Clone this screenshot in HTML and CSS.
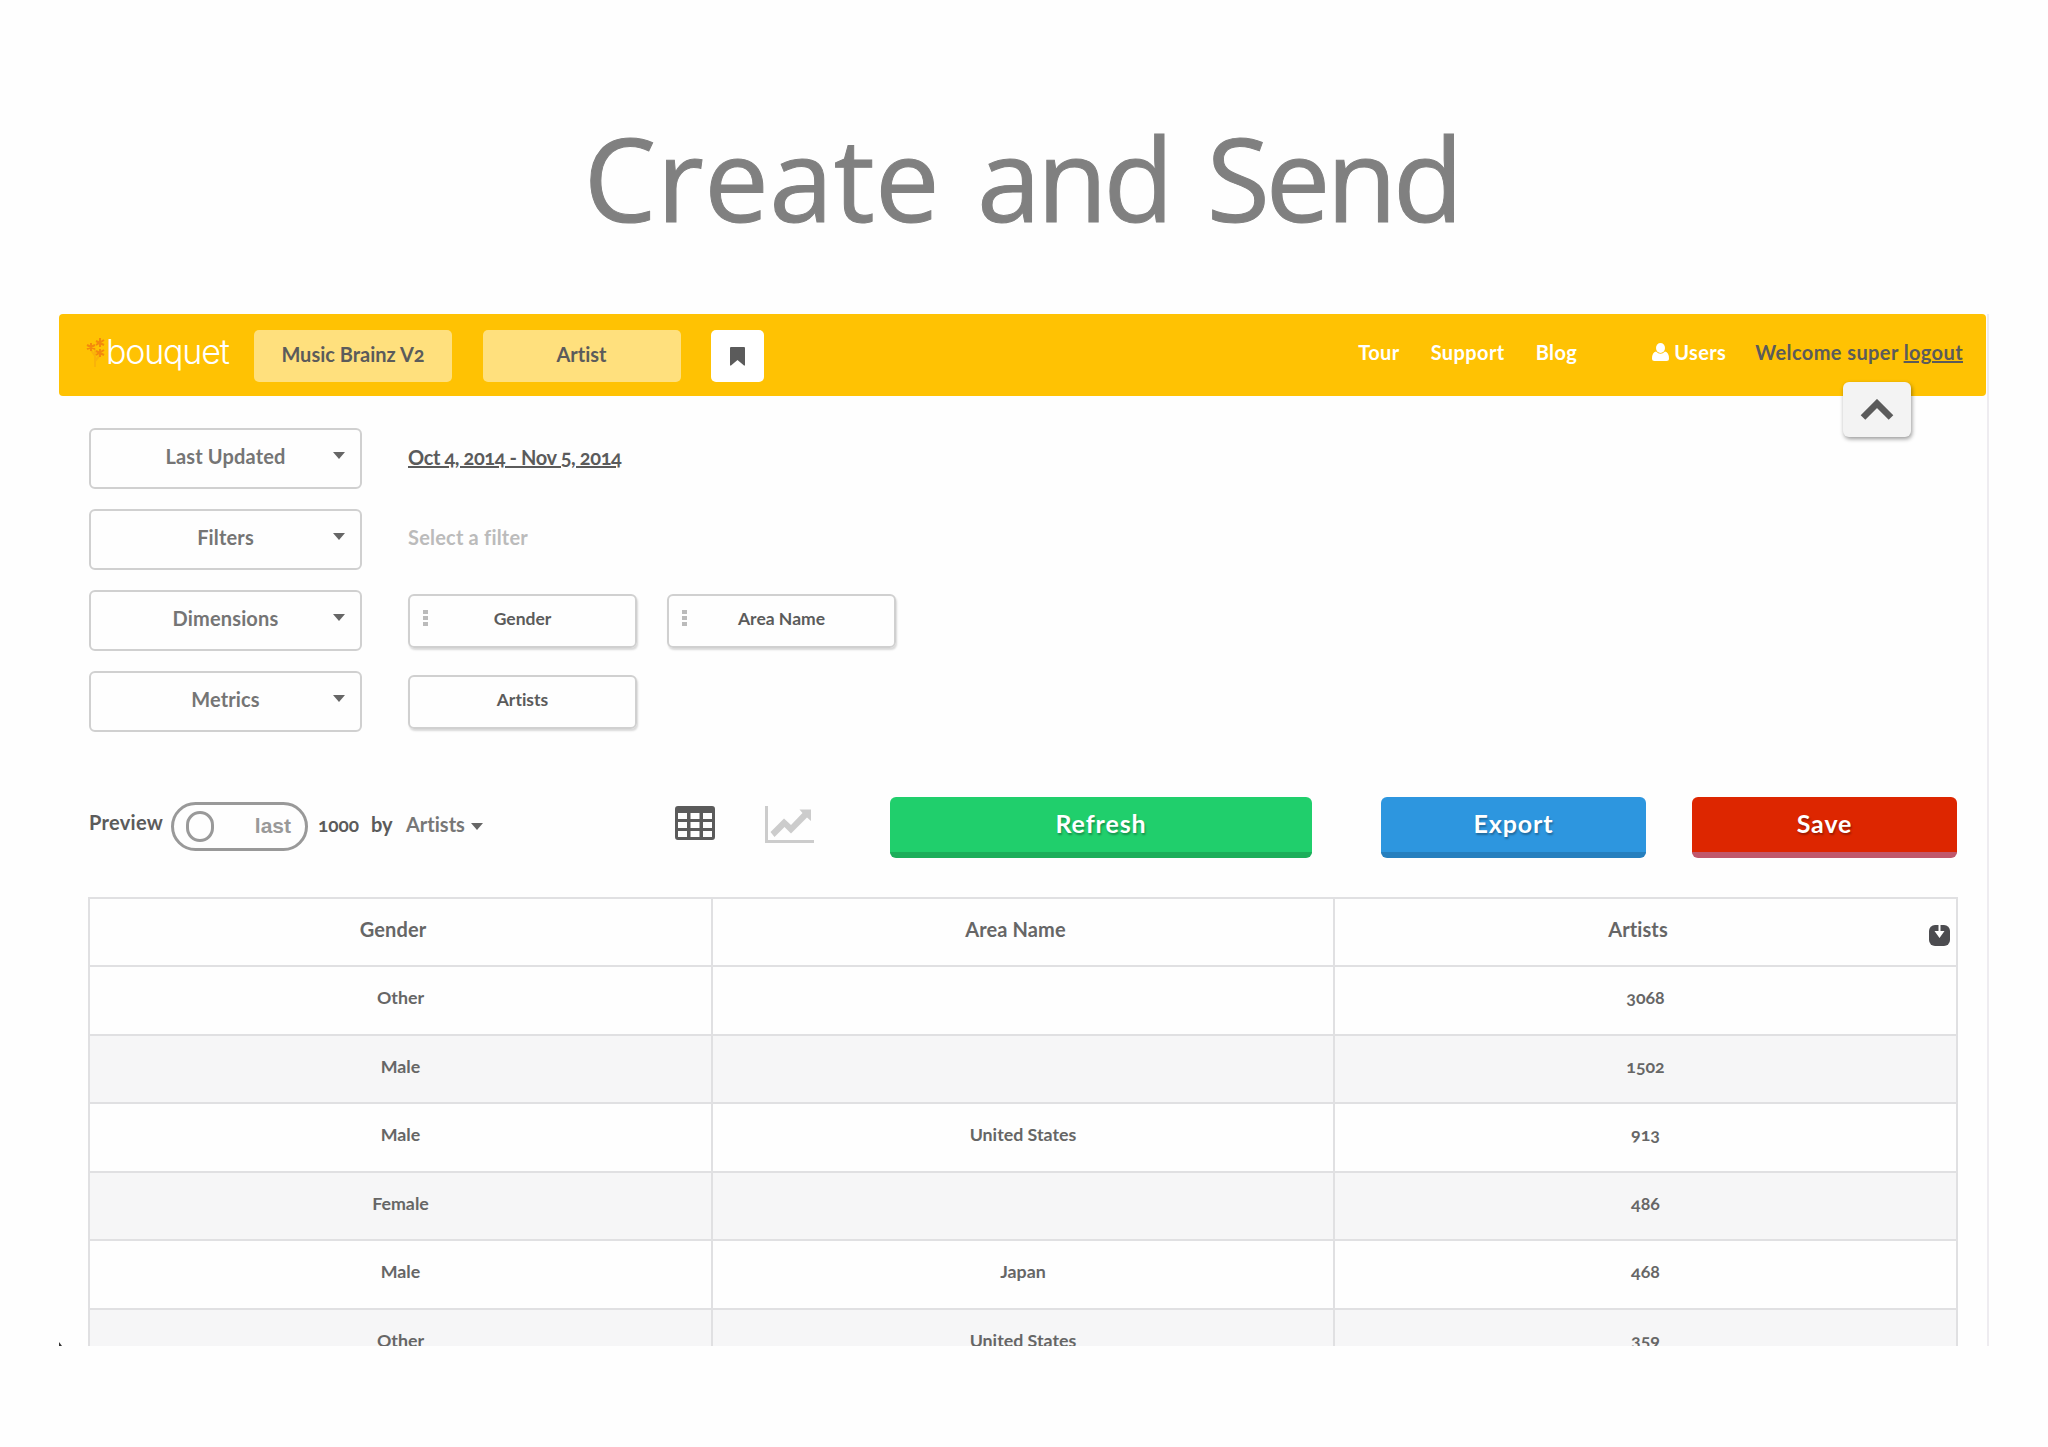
FILE: index.html
```html
<!DOCTYPE html>
<html lang="en">
<head>
    <meta charset="utf-8">
    <title>Create and Send</title>
    <link rel="stylesheet" href="styles.css">
</head>
<body>

<h1 class="title"><span class="loose">Create</span> <span class="tight">and</span> <span class="tight">Send</span></h1>

<div class="app">
    <header class="topbar">
        <div class="logo">
            <svg class="logo-flower" width="20" height="32" viewBox="0 0 20 32">
                <path class="stem" d="M9 12v18M5 13l4 6M14 18l-5 6"/>
                <path class="petals" d="M14 1v9M10 4l8 4M18 3l-8 5M5 6v8M1 8l8 4M9 8l-8 4M14 12v8M10 14l8 4M18 13l-8 5"/>
            </svg>
            <span class="logo-name">bouquet</span>
        </div>
        <button class="chip">Music Brainz V2</button>
        <button class="chip">Artist</button>
        <button class="bookmark">
            <svg width="15" height="19" viewBox="0 0 15 19"><path d="M1 0h13q1 0 1 1v17.5h-1L7.500 13 1 18.500H0V1q0-1 1-1z"/></svg>
        </button>
        <nav class="links">
            <a class="tour">Tour</a>
            <a class="support">Support</a>
            <a class="blog">Blog</a>
            <a class="users"><svg width="17" height="18" viewBox="0 0 17 18"><ellipse cx="8.500" cy="5" rx="4.500" ry="5"/><path d="M4 8.500Q8.500 13 13 8.500Q17 9.500 17 15.500Q17 18 14.500 18H2.500Q0 18 0 15.500Q0 9.500 4 8.500z"/></svg>Users</a>
            <span class="welcome">Welcome super <u>logout</u></span>
        </nav>
        <button class="collapse">
            <svg width="34" height="22" viewBox="0 0 34 22"><path d="M3 18.500L17 4.500L31 18.500"/></svg>
        </button>
    </header>

    <section class="settings">
        <div class="setting">
            <div class="select">Last Updated<i class="caret"></i></div>
            <span class="date">Oct 4, 2014 - Nov 5, 2014</span>
        </div>
        <div class="setting">
            <div class="select">Filters<i class="caret"></i></div>
            <span class="placeholder">Select a filter</span>
        </div>
        <div class="setting">
            <div class="select">Dimensions<i class="caret"></i></div>
            <div class="card"><i class="grip"></i>Gender</div>
            <div class="card"><i class="grip"></i>Area Name</div>
        </div>
        <div class="setting">
            <div class="select">Metrics<i class="caret"></i></div>
            <div class="card">Artists</div>
        </div>
    </section>

    <section class="toolbar">
        <div class="preview">
            <span class="preview-label">Preview</span>
            <div class="toggle"><i class="knob"></i><span>last</span></div>
            <span class="count">1000</span>
            <span class="by">by</span>
            <span class="order">Artists<i class="caret"></i></span>
        </div>
        <svg class="icon-table" width="40" height="34" viewBox="0 0 40 34">
            <path fill-rule="evenodd" d="M3 0H37Q40 0 40 3V31Q40 34 37 34H3Q0 34 0 31V3Q0 0 3 0zM3 7v6h9V7zM15.500 7v6h9V7zM28 7v6h9V7zM3 16v6h9v-6zM15.500 16v6h9v-6zM28 16v6h9v-6zM3 25v6h9v-6zM15.500 25v6h9v-6zM28 25v6h9v-6z"/>
        </svg>
        <svg class="icon-chart" width="49" height="37" viewBox="0 0 49 37">
            <path d="M0 0h3v34h46v3H0z"/>
            <path d="M5.500 26L19 12.500L26 19L37.500 7L34.500 3.500H46V15L42 11.500L26 27.500L19.500 21L9.500 31z"/>
        </svg>
        <button class="btn refresh">Refresh</button>
        <button class="btn export">Export</button>
        <button class="btn save">Save</button>
    </section>

    <div class="results">
        <div class="row head">
            <div>Gender</div>
            <div>Area Name</div>
            <div>Artists
                <svg class="sort" width="21" height="21" viewBox="0 0 21 21"><rect width="21" height="21" rx="6"/><path d="M9.500 0h2v6h4l-5 7-5-7h4z"/></svg>
            </div>
        </div>
        <div class="row"><div>Other</div><div></div><div>3068</div></div>
        <div class="row"><div>Male</div><div></div><div>1502</div></div>
        <div class="row"><div>Male</div><div>United States</div><div>913</div></div>
        <div class="row"><div>Female</div><div></div><div>486</div></div>
        <div class="row"><div>Male</div><div>Japan</div><div>468</div></div>
        <div class="row"><div>Other</div><div>United States</div><div>359</div></div>
    </div>
    <i class="speck"></i>
</div>

</body>
</html>
```
FILE: styles.css
```css
* {
    box-sizing: border-box;
}
body {
    margin: 0;
    height: 1447px;
    overflow: hidden;
    background-color: #fefefe;
    font-family: Lato, "Open Sans", sans-serif;
    font-weight: bold;
    font-size: 20px;
    font-variant-numeric: oldstyle-nums;
    font-variant-ligatures: none;
    color: #5b5b5b;
}
button {
    border: none;
    padding: 0;
    font: inherit;
    font-variant-numeric: oldstyle-nums;
    font-variant-ligatures: none;
    color: inherit;
}
svg {
    display: block;
    flex: none;
}
.title {
    margin: 0;
    height: 314px;
    padding: 99px 5px 0 0;
    text-align: center;
    font-family: "Open Sans", "Noto Sans", sans-serif;
    font-weight: 400;
    font-size: 115px;
    line-height: 157px;
    word-spacing: 7px;
    color: #808080;
    -webkit-text-stroke: 1px #808080;
}
.loose {
    letter-spacing: 0.5px;
}
.tight {
    letter-spacing: -4px;
}
.app {
    position: relative;
    width: 1930px;
    height: 1032px;
    margin-left: 59px;
    border-right: 2px solid #eeecf0;
    overflow: hidden;
}

/* yellow header */
.topbar {
    position: relative;
    display: flex;
    align-items: flex-start;
    width: 1927px;
    height: 82px;
    padding: 16px 0 0 27px;
    background-color: #ffc203;
    border-radius: 4px;
}
.logo {
    display: flex;
    width: 168px;
}
.logo-flower {
    margin-top: 7px;
}
.logo-flower path {
    fill: none;
    stroke: #f48a0c;
    stroke-width: 2;
}
.logo-flower .stem {
    stroke: #f9b30a;
}
.logo-name {
    font-family: Inter, Lato, sans-serif;
    font-size: 34px;
    line-height: 40px;
    font-weight: 300;
    letter-spacing: -1.200px;
    color: #fff;
    margin-top: 2px;
}
.chip {
    width: 198px;
    height: 52px;
    margin-right: 30.500px;
    padding-bottom: 5px;
    border-radius: 5px;
    background-color: #ffe07d;
}
.bookmark {
    width: 53px;
    height: 52px;
    border-radius: 5px;
    background-color: #fff;
    display: flex;
    align-items: center;
    justify-content: center;
}
.bookmark svg, .icon-table {
    fill: #5b5b5b;
}
.links {
    display: flex;
    margin-left: auto;
    padding-right: 23px;
    line-height: 24px;
    margin-top: 10px;
    letter-spacing: 0.4px;
    color: #fff;
}
.support {
    margin: 0 31px 0 31px;
}
.users {
    display: flex;
    align-items: center;
    margin: 0 29px 0 75px;
}
.users svg {
    fill: #fff;
    margin-right: 5px;
}
.welcome {
    color: #5b5b5b;
}
.collapse {
    position: absolute;
    left: 1784px;
    top: 68px;
    width: 68px;
    height: 55px;
    border-radius: 6px;
    background-color: #f3f3f3;
    box-shadow: 1px 2px 4px rgba(0, 0, 0, 0.4);
    display: flex;
    align-items: center;
    justify-content: center;
}
.collapse path {
    fill: none;
    stroke: #5b5b5b;
    stroke-width: 6.500;
}

/* settings rows */
.settings {
    padding: 32px 0 0 30px;
}
.setting {
    display: flex;
    align-items: center;
    height: 61px;
    margin-bottom: 19.900px;
}
.select {
    position: relative;
    width: 273px;
    height: 61px;
    margin-right: 46px;
    border: 2px solid #d0d0d0;
    border-radius: 6px;
    text-align: center;
    line-height: 52px;
    letter-spacing: 0.15px;
    color: #757575;
}
.caret {
    display: inline-block;
    border: 6px solid transparent;
    border-top: 7px solid #666;
    border-bottom: none;
}
.select .caret {
    position: absolute;
    right: 15px;
    top: 22px;
}
.date {
    text-decoration: underline;
    letter-spacing: -0.4px;
    margin-bottom: 3px;
}
.placeholder {
    color: #bbb;
    letter-spacing: 0.2px;
    margin-bottom: 4px;
}
.card {
    position: relative;
    width: 229px;
    height: 54px;
    margin: 2px 30px 0 0;
    border: 2px solid #d0d0d0;
    border-radius: 6px;
    box-shadow: 1px 2px 2px rgba(0, 0, 0, 0.15);
    text-align: center;
    font-size: 17.500px;
    line-height: 46px;
}
.grip {
    position: absolute;
    left: 13px;
    top: 14px;
    width: 5px;
    height: 16px;
    background: repeating-linear-gradient(#bbb 0 4px, transparent 4px 6px);
}

/* preview and action buttons */
.toolbar {
    display: flex;
    align-items: flex-start;
    height: 100px;
    margin: 65px 0 0 30px;
}
.preview {
    display: flex;
    width: 586px;
    padding-top: 5px;
    line-height: 41px;
}
.preview-label {
    width: 82px;
    letter-spacing: 0.3px;
}
.toggle {
    display: flex;
    align-items: center;
    justify-content: space-between;
    width: 137px;
    height: 49px;
    padding: 0 14px 0 12px;
    margin-right: 10px;
    border: 3px solid #999;
    border-radius: 25px;
    font: bold 21px "Liberation Sans", sans-serif;
    color: #999;
}
.knob {
    width: 28px;
    height: 31px;
    border: 3px solid #999;
    border-radius: 14px;
}
.count {
    width: 53px;
    padding-top: 2px;
    font-size: 19px;
}
.by {
    width: 35px;
    padding-top: 2px;
}
.order {
    padding-top: 2px;
    color: #777;
}
.order .caret {
    margin-left: 6px;
    margin-bottom: 2px;
}
.icon-table {
    margin: 9px 50px 0 0;
}
.icon-chart {
    margin: 9px 76px 0 0;
    fill: #ccc;
}
.btn {
    width: 265px;
    height: 61px;
    padding-bottom: 2px;
    border-bottom: 6px solid;
    border-radius: 6px;
    font-size: 25px;
    letter-spacing: 0.9px;
    color: #fff;
    text-shadow: 1px 2px 2px rgba(0, 0, 0, 0.3);
}
.refresh {
    width: 422px;
    margin-right: 69px;
    background-color: #20cf6c;
    border-color: #1cae5a;
}
.export {
    margin-right: 46px;
    background-color: #2d96df;
    border-color: #267fbe;
}
.save {
    background-color: #dd2600;
    border-color: #c0576b;
}

/* results table */
.results {
    width: 1870px;
    margin-left: 29px;
    border: 2px solid #e0e0e2;
    border-bottom: none;
}
.row {
    display: grid;
    grid-template-columns: 621px 622px 1fr;
    height: 68.500px;
    border-bottom: 2px solid #e0e0e2;
    text-align: center;
    font-size: 17.800px;
    line-height: 60px;
    color: #666;
}
.row > div + div {
    border-left: 2px solid #e0e0e2;
}
.row:nth-child(odd) {
    background-color: #f6f6f7;
}
.row.head {
    background-color: transparent;
    font-size: 20px;
    letter-spacing: 0.1px;
}
.head > div {
    position: relative;
    padding-right: 15px;
}
.sort {
    position: absolute;
    right: 6px;
    top: 26px;
    fill: #4c4c50;
}
.sort path {
    fill: #fff;
}
.speck {
    position: absolute;
    left: 0;
    bottom: 0;
    border-left: 3px solid #333;
    border-top: 4px solid transparent;
}
```
